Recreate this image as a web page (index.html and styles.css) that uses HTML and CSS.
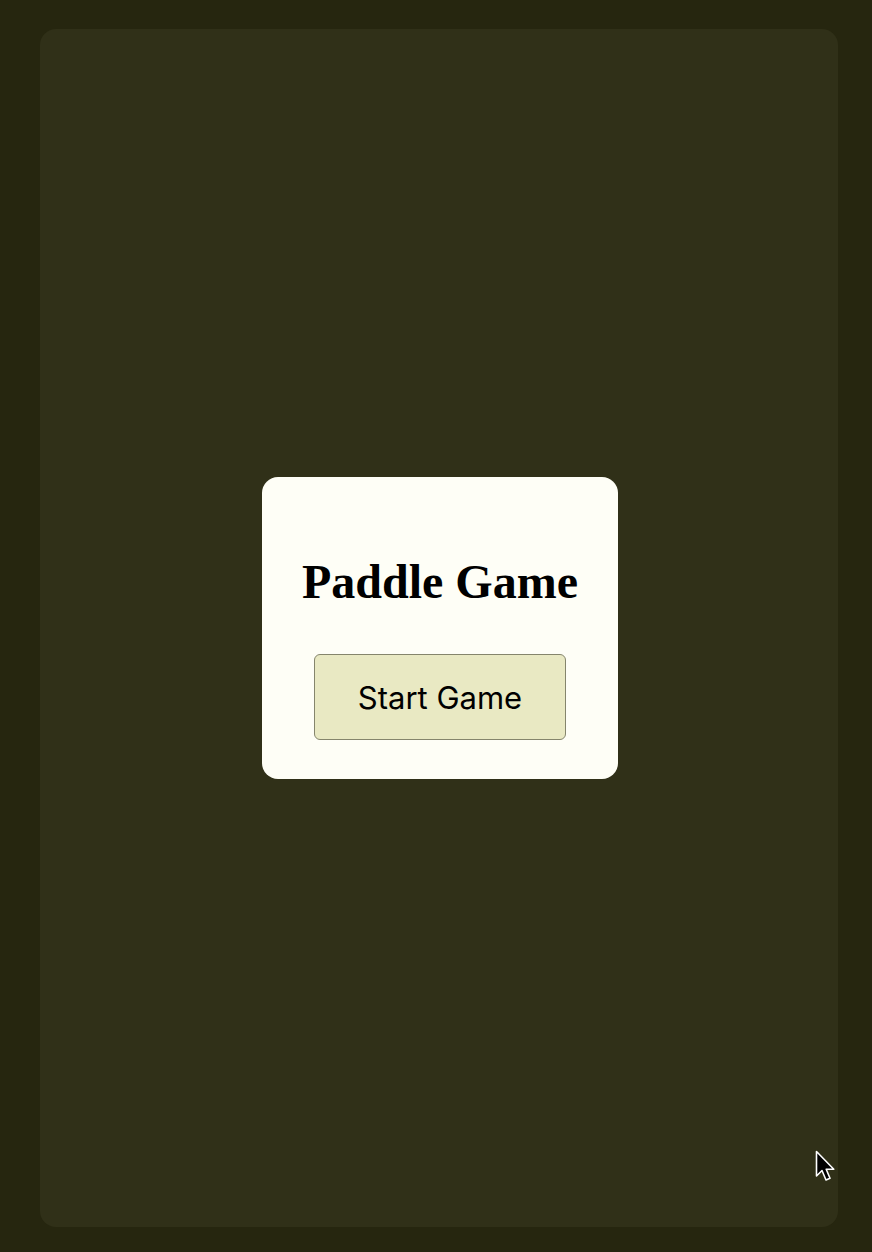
FILE: index.html
```html
<!DOCTYPE html>
<html lang="en">
<head>
<meta charset="utf-8">
<title>Paddle Game</title>
<link rel="stylesheet" href="styles.css">
</head>
<body>
<main class="stage">
  <section class="menu">
    <h1 class="title">Paddle Game</h1>
    <button class="start" type="button">Start Game</button>
  </section>
  <svg class="cursor" width="24" height="36" viewBox="0 0 24 36" aria-hidden="true">
    <path d="M1.5 1.5 L1.5 26 L7 20.5 L11 30 L15 28.3 L11.2 19.2 L18.8 19.2 Z" fill="#000" stroke="#fff" stroke-width="1.6" stroke-linejoin="round"/>
  </svg>
</main>
</body>
</html>
```

FILE: styles.css
```css
html, body {
  margin: 0;
  padding: 0;
}

body {
  background: #26260f;
  width: 872px;
  height: 1252px;
  box-sizing: border-box;
  padding: 29px 34px 25px 40px;
}

.stage {
  position: relative;
  height: 100%;
  background: #303018;
  border-radius: 16px;
  padding-left: 2px;
  display: flex;
  align-items: center;
  justify-content: center;
}

.menu {
  background: #fefef6;
  border-radius: 16px;
  width: 356px;
  box-sizing: border-box;
  padding: 77px 0 39px;
  display: flex;
  flex-direction: column;
  align-items: center;
}

.title {
  margin: 0;
  font-family: "Liberation Serif", "Times New Roman", serif;
  font-weight: bold;
  font-size: 48px;
  line-height: 56px;
  color: #000;
}

.start {
  margin-top: 44px;
  width: 252px;
  height: 86px;
  box-sizing: border-box;
  background: #e9e9c3;
  border: 1.5px solid #85856c;
  border-radius: 6px;
  font-family: Inter, "Noto Sans", sans-serif;
  font-size: 31px;
  color: #000;
  padding: 0;
}

.cursor {
  position: absolute;
  left: 775px;
  top: 1121px;
}
```
